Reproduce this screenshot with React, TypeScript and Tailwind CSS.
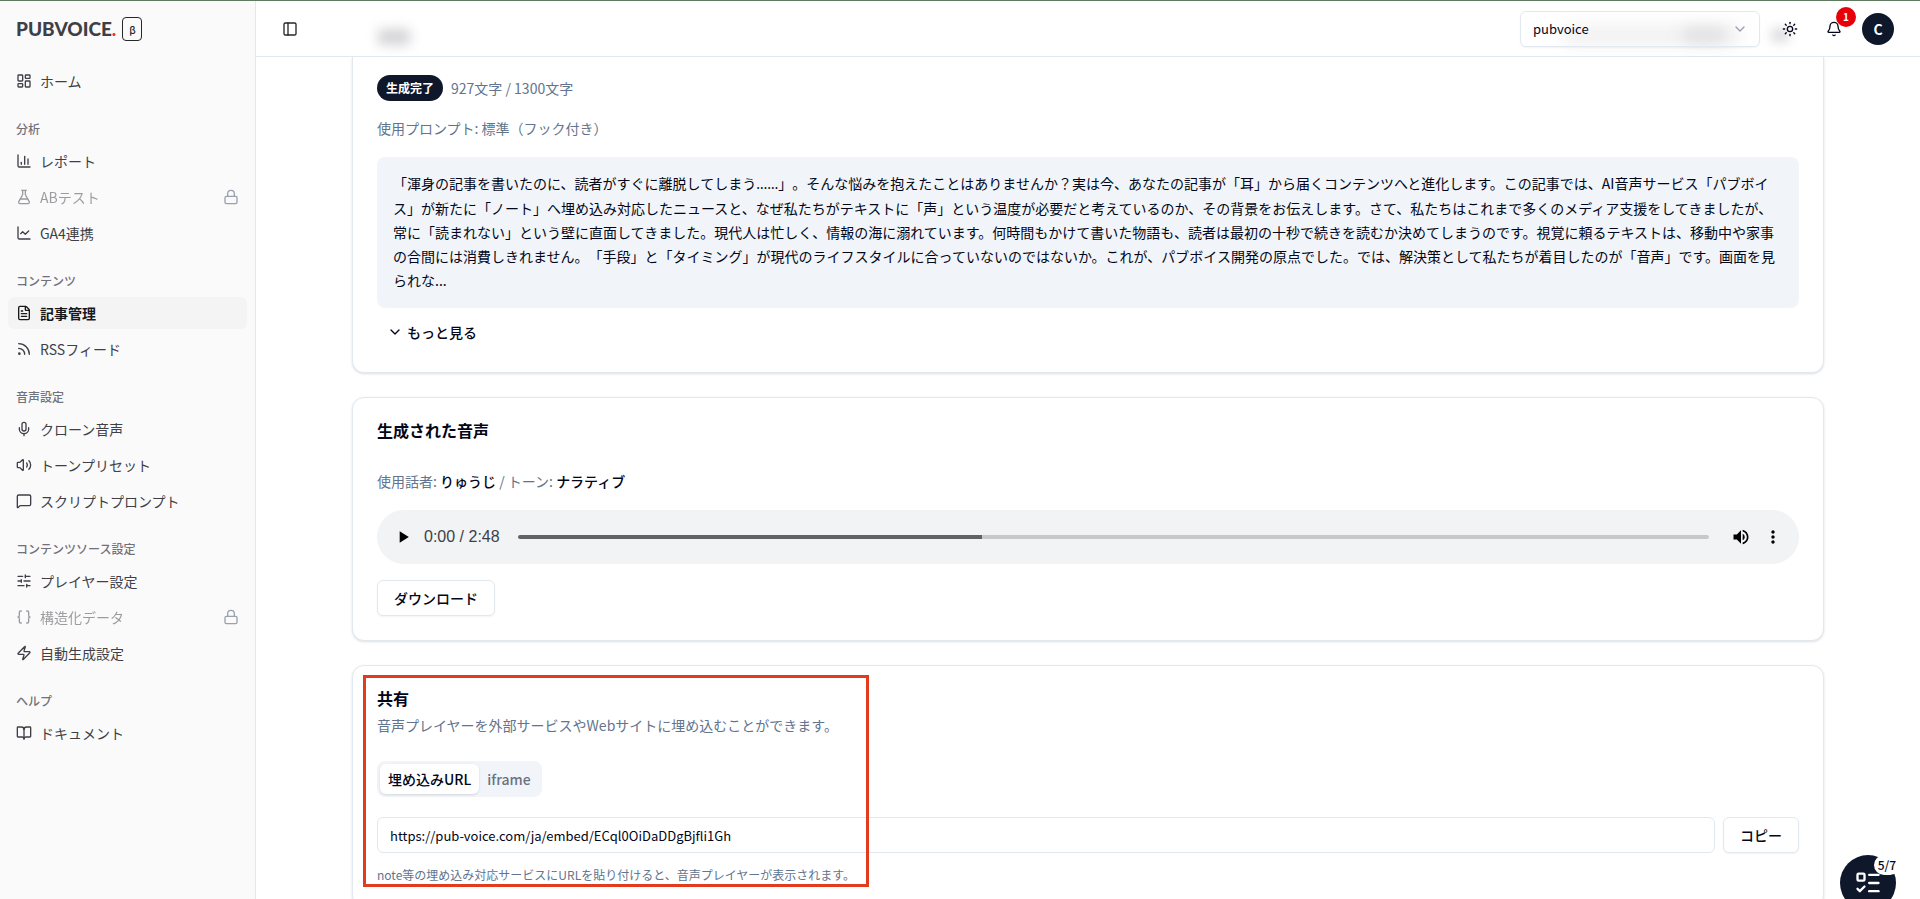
import type { ReactNode } from "react";
import {
  Bell,
  BookOpen,
  Braces,
  ChartColumn,
  ChartLine,
  ChevronDown,
  FileText,
  FlaskConical,
  LayoutDashboard,
  ListTodo,
  Lock,
  MessageSquare,
  Mic,
  PanelLeft,
  Rss,
  SlidersHorizontal,
  Sun,
  Volume2,
  Zap,
  type LucideIcon,
} from "lucide-react";
import { MdMoreVert, MdPlayArrow, MdVolumeUp } from "react-icons/md";
import clsx from "clsx";

interface NavItem {
  label: string;
  icon: LucideIcon;
  active?: boolean;
  locked?: boolean;
}

interface NavGroup {
  title?: string;
  items: NavItem[];
}

const NAV: NavGroup[] = [
  { items: [{ label: "ホーム", icon: LayoutDashboard }] },
  {
    title: "分析",
    items: [
      { label: "レポート", icon: ChartColumn },
      { label: "ABテスト", icon: FlaskConical, locked: true },
      { label: "GA4連携", icon: ChartLine },
    ],
  },
  {
    title: "コンテンツ",
    items: [
      { label: "記事管理", icon: FileText, active: true },
      { label: "RSSフィード", icon: Rss },
    ],
  },
  {
    title: "音声設定",
    items: [
      { label: "クローン音声", icon: Mic },
      { label: "トーンプリセット", icon: Volume2 },
      { label: "スクリプトプロンプト", icon: MessageSquare },
    ],
  },
  {
    title: "コンテンツソース設定",
    items: [
      { label: "プレイヤー設定", icon: SlidersHorizontal },
      { label: "構造化データ", icon: Braces, locked: true },
      { label: "自動生成設定", icon: Zap },
    ],
  },
  { title: "ヘルプ", items: [{ label: "ドキュメント", icon: BookOpen }] },
];

function Sidebar() {
  return (
    <aside className="w-64 shrink-0 border-r border-slate-200 bg-[#fafafa] text-zinc-700">
      <a href="#" className="flex h-14 items-center gap-1.5 px-4">
        <span className="font-['Lato'] text-[19px] font-black">
          PUBVOICE<span className="text-red-500">.</span>
        </span>
        <span className="flex h-6 w-5 items-center justify-center rounded border border-zinc-800 text-[10px] font-medium text-zinc-800">
          β
        </span>
      </a>
      <nav>
        {NAV.map((group, i) => (
          <div key={i} className="p-2">
            {group.title && (
              <h2 className="flex h-8 items-center px-2 text-xs font-medium text-zinc-500">{group.title}</h2>
            )}
            <ul className="space-y-1">
              {group.items.map((item) => (
                <li key={item.label}>
                  <a
                    href="#"
                    className={clsx(
                      "flex h-8 items-center gap-2 rounded-md px-2 text-sm",
                      item.active && "bg-zinc-100 font-bold text-zinc-900",
                    )}
                  >
                    <item.icon className={clsx("size-4", item.locked && "opacity-50")} />
                    <span className={clsx("flex-1", item.locked && "opacity-50")}>{item.label}</span>
                    {item.locked && <Lock className="size-4 text-gray-400" />}
                  </a>
                </li>
              ))}
            </ul>
          </div>
        ))}
      </nav>
    </aside>
  );
}

function Header() {
  return (
    <header className="relative flex h-14 shrink-0 items-center justify-between border-b border-slate-200 px-[26px]">
      <div className="absolute top-7 left-[122px] h-4 w-8 bg-zinc-500/30 blur-[6px]" />
      <div className="absolute top-6 right-[180px] h-5 w-44 bg-zinc-500/10 blur-[8px]" />
      <div className="absolute top-7 right-[196px] h-3 w-10 bg-zinc-500/20 blur-[8px]" />
      <div className="absolute top-7 right-[132px] h-3 w-4 bg-zinc-500/30 blur-[6px]" />
      <button type="button" aria-label="サイドバー" className="text-zinc-800">
        <PanelLeft className="size-4" />
      </button>
      <div className="relative flex items-center">
        <div className="relative">
          <select
            aria-label="ワークスペース"
            className="h-9 w-60 appearance-none rounded-md border border-slate-200 px-3 text-[13px] shadow-xs"
          >
            <option>pubvoice</option>
          </select>
          <ChevronDown className="pointer-events-none absolute top-2.5 right-3 size-4 text-gray-400" />
        </div>
        <button type="button" aria-label="テーマ" className="ml-[22px]">
          <Sun className="size-4" />
        </button>
        <button type="button" aria-label="通知" className="relative ml-7">
          <Bell className="size-4" />
          <span className="absolute -top-3.5 left-2.5 flex size-5 items-center justify-center rounded-full bg-[#e7000b] text-[10px] font-bold text-white">
            1
          </span>
        </button>
        <button
          type="button"
          className="ml-5 flex size-8 items-center justify-center rounded-full bg-slate-900 text-sm font-bold text-white"
        >
          C
        </button>
      </div>
    </header>
  );
}

function Card({ className, children }: { className?: string; children: ReactNode }) {
  return (
    <section className={clsx("relative border border-slate-200 bg-white px-6 pb-6 shadow-sm", className)}>
      {children}
    </section>
  );
}

function OutlineButton({ children }: { children: ReactNode }) {
  return (
    <button
      type="button"
      className="h-9 shrink-0 rounded-md border border-slate-200 bg-white px-4 text-sm font-medium shadow-xs"
    >
      {children}
    </button>
  );
}

function AudioPlayer() {
  return (
    <div className="mt-[19px] flex h-[54px] items-center rounded-full bg-[#f1f3f4] px-4 text-black">
      <button type="button" aria-label="再生">
        <MdPlayArrow className="size-5" />
      </button>
      <span className="ml-[11px] font-['Liberation_Sans'] text-base text-zinc-700">0:00 / 2:48</span>
      <input
        type="range"
        aria-label="再生位置"
        defaultValue={0}
        className="ml-[18px] h-1 min-w-0 flex-1 appearance-none rounded-full bg-[linear-gradient(to_right,#5f6368_39%,#c6c8ca_39%)] [&::-webkit-slider-thumb]:appearance-none"
      />
      <button type="button" aria-label="音量" className="ml-[22px]">
        <MdVolumeUp className="size-5" />
      </button>
      <button type="button" aria-label="メニュー" className="ml-3">
        <MdMoreVert className="size-5" />
      </button>
    </div>
  );
}

export default function App() {
  return (
    <div className="relative flex h-screen overflow-hidden border-t border-[#5f7a5f] bg-white font-['Noto_Sans_CJK_JP',sans-serif] text-slate-950">
      <Sidebar />
      <div className="flex min-w-0 flex-1 flex-col">
        <Header />
        <main className="flex min-h-0 flex-1 flex-col gap-6 overflow-hidden px-24 *:shrink-0">
          <Card className="rounded-b-xl border-t-0 pt-[18px]">
            <div className="flex items-center gap-2">
              <span className="flex h-[26px] items-center rounded-full bg-slate-900 px-[9px] text-xs font-bold text-white">
                生成完了
              </span>
              <span className="text-sm text-slate-500">927文字 / 1300文字</span>
            </div>
            <p className="mt-[17px] text-sm text-slate-500">使用プロンプト: 標準（フック付き）</p>
            <p className="mt-[19px] rounded-lg bg-slate-100 px-4 pt-3.5 pb-4 text-sm leading-6 [text-spacing-trim:space-all]">
              「渾身の記事を書いたのに、読者がすぐに離脱してしまう<span className="font-['Noto_Sans']">……</span>
              」。そんな悩みを抱えたことはありませんか？実は今、あなたの記事が「耳」から届くコンテンツへと進化します。この記事では、AI音声サービス「パブボイス」が新たに「ノート」へ埋め込み対応したニュースと、なぜ私たちがテキストに「声」という温度が必要だと考えているのか、その背景をお伝えします。さて、私たちはこれまで多くのメディア支援をしてきましたが、常に「読まれない」という壁に直面してきました。現代人は忙しく、情報の海に溺れています。何時間もかけて書いた物語も、読者は最初の十秒で続きを読むか決めてしまうのです。視覚に頼るテキストは、移動中や家事の合間には消費しきれません。「手段」と「タイミング」が現代のライフスタイルに合っていないのではないか。これが、パブボイス開発の原点でした。では、解決策として私たちが着目したのが「音声」です。画面を見られな...
            </p>
            <button type="button" className="mt-2 flex h-8 items-center gap-1 px-2.5 text-sm font-medium">
              <ChevronDown className="size-4" />
              もっと見る
            </button>
          </Card>

          <Card className="rounded-xl pt-6">
            <h2 className="text-base leading-4 font-bold">生成された音声</h2>
            <p className="mt-[33px] text-sm text-slate-500">
              使用話者: <span className="font-medium text-slate-950">りゅうじ</span> / トーン:{" "}
              <span className="font-medium text-slate-950">ナラティブ</span>
            </p>
            <AudioPlayer />
            <div className="mt-4">
              <OutlineButton>ダウンロード</OutlineButton>
            </div>
          </Card>

          <Card className="rounded-xl pt-6">
            {/* highlight frame around the share settings */}
            <div className="pointer-events-none absolute top-[9px] left-2.5 h-[212px] w-[506px] border-3 border-[#e23b1d]" />
            <h2 className="text-base leading-4 font-bold">共有</h2>
            <p className="mt-[9px] text-sm text-slate-500">
              音声プレイヤーを外部サービスやWebサイトに埋め込むことができます。
            </p>
            <div role="tablist" className="mt-[26px] inline-flex h-9 items-center rounded-lg bg-slate-100 p-[3px]">
              <button
                type="button"
                role="tab"
                aria-selected="true"
                className="h-[30px] rounded-md bg-white px-2 text-sm font-medium shadow-sm"
              >
                埋め込みURL
              </button>
              <button
                type="button"
                role="tab"
                aria-selected="false"
                className="h-[30px] rounded-md px-2 text-sm font-medium text-gray-500"
              >
                iframe
              </button>
            </div>
            <div className="mt-5 flex gap-2">
              <input
                type="text"
                readOnly
                aria-label="埋め込みURL"
                value="https://pub-voice.com/ja/embed/ECql0OiDaDDgBjfli1Gh"
                className="h-9 min-w-0 flex-1 rounded-md border border-slate-200 px-3 text-[13px]"
              />
              <OutlineButton>コピー</OutlineButton>
            </div>
            <p className="mt-3.5 text-xs text-slate-500">
              note等の埋め込み対応サービスにURLを貼り付けると、音声プレイヤーが表示されます。
            </p>
          </Card>
        </main>
      </div>

      <button
        type="button"
        aria-label="チェックリスト"
        className="absolute right-6 -bottom-3 flex size-14 items-center justify-center rounded-full bg-slate-900 text-white"
      >
        <ListTodo className="size-7" />
        <span className="absolute top-0 -right-1 flex h-5 items-center rounded-full bg-white px-1 text-xs font-medium text-slate-950">
          5/7
        </span>
      </button>
    </div>
  );
}
